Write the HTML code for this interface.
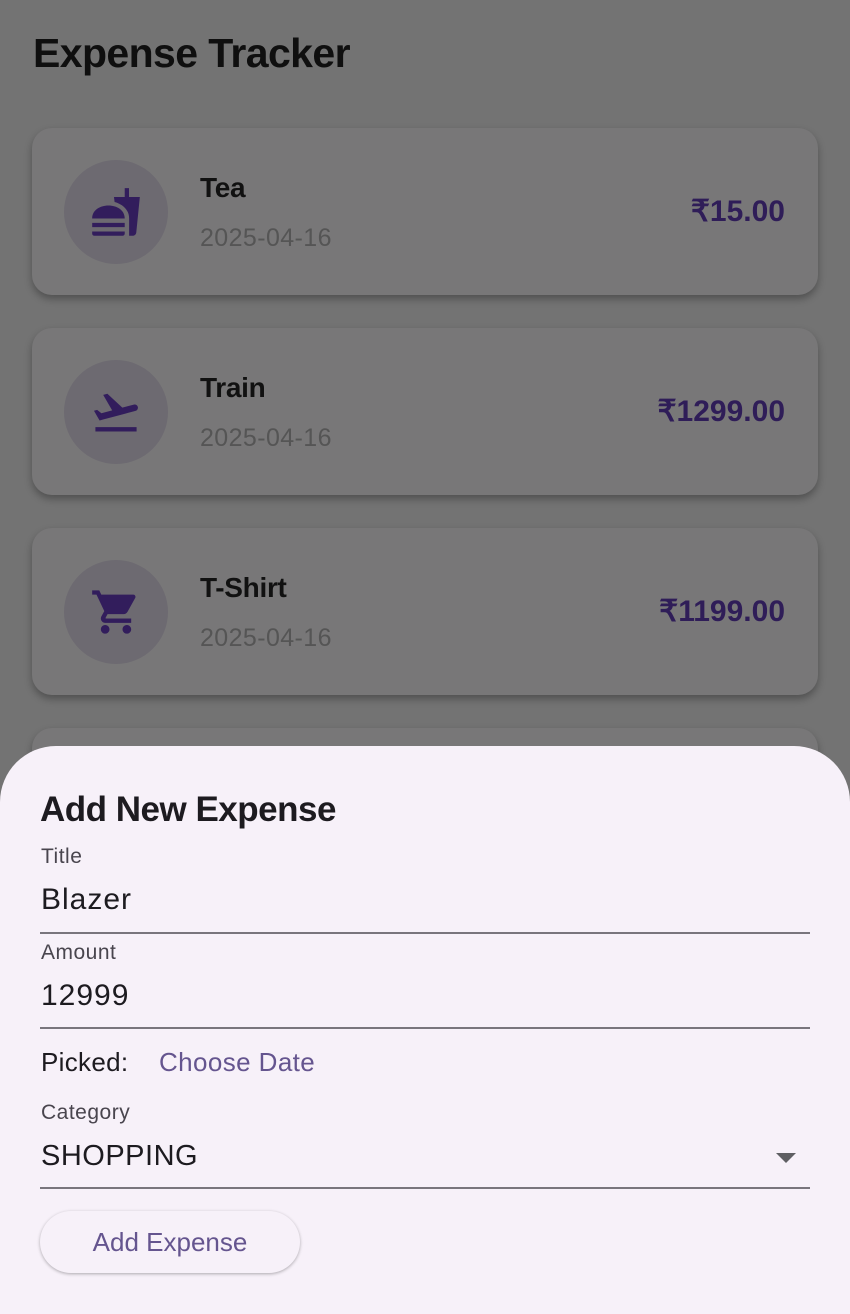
<!DOCTYPE html>
<html><head><style>
body{margin:0;width:850px;height:1314px;background:#737373;font-family:"Liberation Sans",sans-serif;position:relative;overflow:hidden}
h1{position:absolute;left:33px;top:30px;margin:0;font-size:41px;font-weight:bold;color:#0f0f0f;letter-spacing:-0.6px}
.card{position:absolute;left:32px;width:786px;height:167px;background:#787778;border-radius:20px;box-shadow:0 4px 8px rgba(0,0,0,.3)}
.circ{position:absolute;left:32px;top:32px;width:104px;height:104px;border-radius:50%;background:#6d6a71}
.circ svg{position:absolute;left:26px;top:26px;width:52px;height:52px;fill:#321d5c}
.t{position:absolute;left:168px;top:44px;font-size:28px;color:#111;font-weight:bold;letter-spacing:-0.3px}
.d{position:absolute;left:168px;top:96px;font-size:25px;color:#555;letter-spacing:0.4px}
.a{position:absolute;right:33px;top:66px;font-size:30px;font-weight:bold;color:#2f1d58}
.sheet{position:absolute;left:0;top:746px;width:850px;height:568px;background:#f7f1f9;border-radius:56px 56px 0 0}
.sheet div{position:absolute}
.lbl{font-size:21px;color:#49454e;left:41px;letter-spacing:0.5px}
.val{font-size:30px;color:#1d1b20;left:41px;letter-spacing:1px}
.line{left:40px;width:770px;height:2px;background:#79757d}
</style></head><body>
<h1>Expense Tracker</h1>
<div class="card" style="top:128px"><div class="circ"><svg viewBox="0 0 24 24"><path d="M18.06 22.99h1.66c.84 0 1.530-.64 1.63-1.46L23 5.05h-5V1h-1.97v4.05h-4.97l.3 2.34c1.710.47 3.31 1.32 4.27 2.26 1.44 1.42 2.43 2.89 2.43 5.29v8.05zM1 21.99V21h15.03v.99c0 .55-.45 1-1.01 1H2.01c-.56 0-1.010-.45-1.01-1zm15.03-7c0-8-15.03-8-15.03 0h15.03zM1.02 17h15v2h-15z"/></svg></div><div class="t">Tea</div><div class="d">2025-04-16</div><div class="a">₹15.00</div></div>
<div class="card" style="top:328px"><div class="circ"><svg viewBox="0 0 24 24"><path d="M2.5 19h19v2h-19zm19.57-9.36c-.21-.8-1.04-1.28-1.84-1.06L14.92 10l-6.9-6.43-1.93.51 4.14 7.17-4.97 1.33-1.97-1.54-1.45.39 1.82 3.16.77 1.33 1.6-.43 5.31-1.42 4.35-1.16L21 11.49c.81-.23 1.28-1.05 1.07-1.85z"/></svg></div><div class="t">Train</div><div class="d">2025-04-16</div><div class="a">₹1299.00</div></div>
<div class="card" style="top:528px"><div class="circ"><svg viewBox="0 0 24 24"><path d="M7 18c-1.1 0-1.99.9-1.99 2S5.9 22 7 22s2-.9 2-2-.9-2-2-2zM1 2v2h2l3.6 7.59-1.35 2.45c-.16.28-.25.61-.25.96 0 1.1.9 2 2 2h12v-2H7.42c-.14 0-.25-.11-.25-.25l.03-.12.9-1.630h7.45c.75 0 1.41-.41 1.75-1.03l3.58-6.49c.08-.14.12-.31.12-.48 0-.55-.45-1-1-1H5.21l-.94-2H1zm16 16c-1.1 0-1.99.9-1.990 2s.89 2 1.99 2 2-.9 2-2-.9-2-2-2z"/></svg></div><div class="t">T-Shirt</div><div class="d">2025-04-16</div><div class="a">₹1199.00</div></div>
<div class="card" style="top:728px"></div>
<div class="sheet">
<div style="left:40px;top:44px;font-size:35px;font-weight:bold;color:#1d1b20;letter-spacing:-0.5px">Add New Expense</div>
<div class="lbl" style="top:99px">Title</div>
<div class="val" style="top:137px">Blazer</div>
<div class="line" style="top:186px"></div>
<div class="lbl" style="top:195px">Amount</div>
<div class="val" style="top:233px">12999</div>
<div class="line" style="top:281px"></div>
<div style="left:41px;top:301px;font-size:26px;color:#1d1b20;letter-spacing:0.3px">Picked:</div>
<div style="left:159px;top:301px;font-size:26px;color:#65558f;letter-spacing:0.4px">Choose Date</div>
<div class="lbl" style="top:355px">Category</div>
<div class="val" style="top:394px;font-size:29px;letter-spacing:0.5px">SHOPPING</div>
<div style="left:776px;top:407px;width:0;height:0;border-left:10px solid transparent;border-right:10px solid transparent;border-top:10px solid #5f5f63"></div>
<div class="line" style="top:441px"></div>
<div style="left:40px;top:465px;width:260px;height:62px;border-radius:31px;background:#f7f1f9;box-shadow:0 1px 3px rgba(0,0,0,.3);text-align:center;line-height:62px;font-size:26px;color:#65558f">Add Expense</div>
</div>
</body></html>
